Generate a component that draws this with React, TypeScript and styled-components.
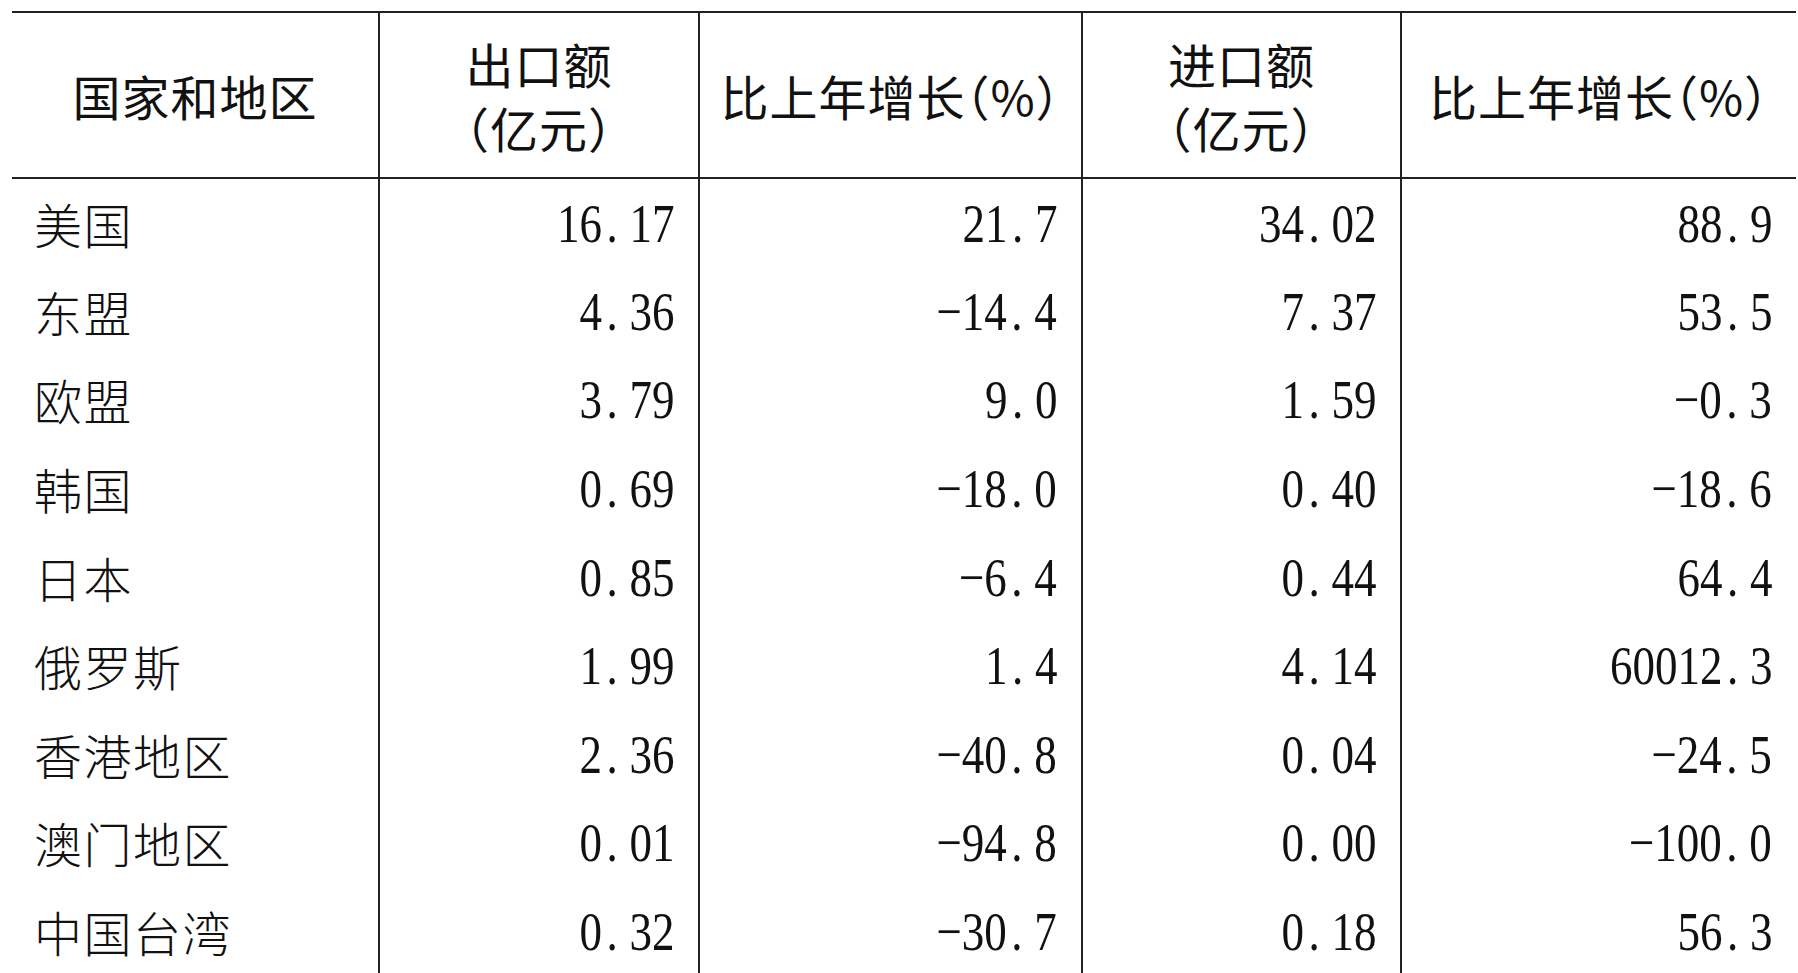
import styled, { createGlobalStyle } from "styled-components";

const GlobalStyle = createGlobalStyle`
  html, body {
    margin: 0;
    padding: 0;
    background: #ffffff;
  }
  body {
    width: 1798px;
    height: 973px;
    overflow: hidden;
    font-family: "Noto Sans CJK SC", sans-serif;
    color: #111;
  }
`;

const Page = styled.div`
  padding: 11px 2px 0 12px;
`;

const Table = styled.table`
  width: 1784px;
  table-layout: fixed;
  border-collapse: collapse;
  border-top: 2px solid #222;
`;

const HeadRow = styled.tr`
  height: 166px;
  border-bottom: 2px solid #222;
`;

const BodyRow = styled.tr`
  height: 88.6px;
`;

const HeadCell = styled.th<{ $first?: boolean }>`
  padding: 0;
  font-family: "Noto Sans CJK SC", sans-serif;
  font-weight: 400;
  font-size: 48px;
  line-height: 64px;
  letter-spacing: 1px;
  font-feature-settings: "halt";
  text-align: center;
  vertical-align: middle;
  white-space: nowrap;
  border-left: ${(p) => (p.$first ? "none" : "2px solid #222")};
`;

const NameCell = styled.td`
  padding: 0 0 0 22px;
  font-family: "Noto Sans CJK SC", sans-serif;
  font-weight: 300;
  font-size: 48px;
  letter-spacing: 1.5px;
  text-align: left;
  vertical-align: middle;
  white-space: nowrap;
`;

const NumCell = styled.td`
  padding: 0 24px 0 0;
  text-align: right;
  vertical-align: middle;
  white-space: nowrap;
  border-left: 2px solid #222;
`;

const Num = styled.span`
  display: inline-block;
  font-family: "Liberation Serif", serif;
  font-size: 50px;
  transform: scale(0.9, 1.1);
  transform-origin: right center;
`;

const Dot = styled.span`
  padding: 0 0.26em 0 0.1em;
`;

type Row = [string, string, string, string, string];

const rows: Row[] = [
  ["美国", "16.17", "21.7", "34.02", "88.9"],
  ["东盟", "4.36", "−14.4", "7.37", "53.5"],
  ["欧盟", "3.79", "9.0", "1.59", "−0.3"],
  ["韩国", "0.69", "−18.0", "0.40", "−18.6"],
  ["日本", "0.85", "−6.4", "0.44", "64.4"],
  ["俄罗斯", "1.99", "1.4", "4.14", "60012.3"],
  ["香港地区", "2.36", "−40.8", "0.04", "−24.5"],
  ["澳门地区", "0.01", "−94.8", "0.00", "−100.0"],
  ["中国台湾", "0.32", "−30.7", "0.18", "56.3"],
];

function Value({ text }: { text: string }) {
  const [whole, frac] = text.split(".");
  return (
    <Num>
      {whole}
      <Dot>.</Dot>
      {frac}
    </Num>
  );
}

export default function App() {
  return (
    <>
      <GlobalStyle />
      <Page>
        <Table>
          <colgroup>
            <col style={{ width: 367 }} />
            <col style={{ width: 320 }} />
            <col style={{ width: 383 }} />
            <col style={{ width: 319 }} />
            <col style={{ width: 395 }} />
          </colgroup>
          <thead>
            <HeadRow>
              <HeadCell $first>国家和地区</HeadCell>
              <HeadCell>
                出口额
                <br />
                （亿元）
              </HeadCell>
              <HeadCell>比上年增长（%）</HeadCell>
              <HeadCell>
                进口额
                <br />
                （亿元）
              </HeadCell>
              <HeadCell>比上年增长（%）</HeadCell>
            </HeadRow>
          </thead>
          <tbody>
            {rows.map(([name, ...values]) => (
              <BodyRow key={name}>
                <NameCell>{name}</NameCell>
                {values.map((v, i) => (
                  <NumCell key={i}>
                    <Value text={v} />
                  </NumCell>
                ))}
              </BodyRow>
            ))}
          </tbody>
        </Table>
      </Page>
    </>
  );
}
